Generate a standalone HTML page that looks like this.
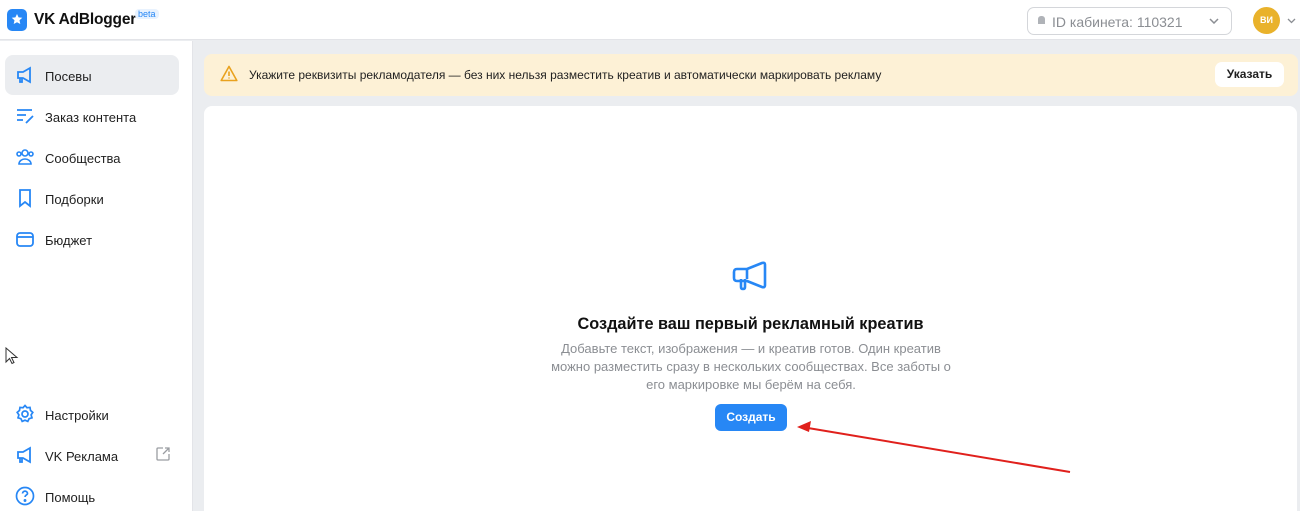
<!DOCTYPE html>
<html><head><meta charset="utf-8"><style>
*{box-sizing:border-box;margin:0;padding:0}
html,body{width:1300px;height:511px;overflow:hidden}
body{font-family:"Liberation Sans",sans-serif;background:#ebedf0;position:relative;color:#1f1f1f}
.hdr{position:absolute;left:0;top:0;width:1300px;height:40px;background:#fff;border-bottom:1px solid #e3e4e8}
.logo{position:absolute;left:7px;top:9px;width:20px;height:22px;background:#2787f5;border-radius:5px}
.brand{position:absolute;left:34px;top:11px;font-size:15.5px;font-weight:bold;color:#111;letter-spacing:-0.2px}
.beta{position:absolute;left:135px;top:9px;font-size:9px;color:#2787f5;background:#e8f2fe;padding:0 3px;border-radius:4px}
.idsel{position:absolute;left:1027px;top:7px;width:205px;height:28px;border:1px solid #d4d6da;border-radius:7px;font-size:14px;color:#8b8e93;padding:6px 0 0 24px}
.av{position:absolute;left:1253px;top:7px;width:27px;height:27px;border-radius:50%;background:#e9b22b;color:#fff;font-size:9px;font-weight:bold;text-align:center;line-height:27px}
.side{position:absolute;left:0;top:41px;width:193px;height:470px;background:#fff;border-right:1px solid #e3e4e8}
.it{position:absolute;left:5px;width:174px;height:40px;border-radius:8px;font-size:13px;padding:14px 0 0 40px}
.it svg{position:absolute;left:10px;top:10px}
.act{background:#ebedf0}
.ban{position:absolute;left:204px;top:54px;width:1094px;height:42px;background:#fdf1d6;border-radius:8px;font-size:12px;padding:14px 0 0 45px}
.btn1{position:absolute;right:14px;top:8px;background:#fff;border-radius:7px;width:69px;height:25px;font-size:12px;font-weight:bold;text-align:center;line-height:25px}
.card{position:absolute;left:204px;top:106px;width:1093px;height:405px;background:#fff;border-radius:8px 8px 0 0}
h2{position:absolute;left:0;width:100%;top:209px;text-align:center;font-size:16.3px;font-weight:bold;color:#111}
.p{position:absolute;left:344px;width:406px;top:234px;text-align:center;font-size:13px;line-height:18px;color:#8b8e93}
.cb{position:absolute;left:511px;top:298px;width:72px;height:27px;background:#2787f5;border-radius:6px;color:#fff;font-size:12px;font-weight:bold;text-align:center;line-height:27px}
</style></head><body>
<div class="hdr">
<div class="logo"><svg width="20" height="22" viewBox="0 0 20 22"><path d="M10 5l1.6 3.4 3.7.4-2.8 2.5.8 3.7L10 13.2 6.7 15l.8-3.7L4.7 8.8l3.7-.4z" fill="#fff"/></svg></div>
<div class="brand">VK AdBlogger</div><div class="beta">beta</div>
<div class="idsel"><span style="position:absolute;left:10px;top:8px;width:7px;height:8px;background:#b0b3b8;border-radius:3px 3px 0 0"></span>ID кабинета: 110321<svg style="position:absolute;right:12px;top:10px" width="10" height="6"><path d="M1 1l4 4 4-4" stroke="#8b8e93" stroke-width="1.5" fill="none"/></svg></div>
<div class="av">ВИ</div>
<svg style="position:absolute;left:1287px;top:18px" width="9" height="6"><path d="M1 1l3.5 3.5L8 1" stroke="#8b8e93" stroke-width="1.3" fill="none"/></svg>
</div>
<div class="side">
<div class="it act" style="top:14px"><svg width="20" height="20" viewBox="0 0 20 20" fill="none" stroke="#2787f5" stroke-width="1.8"><path d="M3 7h5l7-4v14l-7-4H3z"/><path d="M5 13v4h2v-4"/></svg>Посевы</div>
<div class="it" style="top:55px"><svg width="20" height="20" viewBox="0 0 20 20" fill="none" stroke="#2787f5" stroke-width="1.8"><path d="M2 4h15M2 9h9M2 14h6M11 17l7-7"/></svg>Заказ контента</div>
<div class="it" style="top:96px"><svg width="20" height="20" viewBox="0 0 20 20" fill="none" stroke="#2787f5" stroke-width="1.6"><circle cx="10" cy="6" r="3"/><path d="M4 17c0-3 3-5 6-5s6 2 6 5z"/><circle cx="4" cy="7" r="2"/><circle cx="16" cy="7" r="2"/></svg>Сообщества</div>
<div class="it" style="top:137px"><svg width="20" height="20" viewBox="0 0 20 20" fill="none" stroke="#2787f5" stroke-width="1.8"><path d="M5 2h10v16l-5-4-5 4z"/></svg>Подборки</div>
<div class="it" style="top:178px"><svg width="20" height="20" viewBox="0 0 20 20" fill="none" stroke="#2787f5" stroke-width="1.8"><rect x="2" y="4" width="16" height="13" rx="3"/><path d="M2 8h16"/></svg>Бюджет</div>
<div class="it" style="top:353px"><svg width="20" height="20" viewBox="0 0 20 20" fill="none" stroke="#2787f5" stroke-width="1.7"><circle cx="10" cy="10" r="3"/><path d="M10 1.5l2 2.2 3-.3.5 3 2.3 2-1.7 2.5.9 2.9-2.9.9-1.3 2.7-2.8-1.2-2.8 1.2-1.3-2.7-2.9-.9.9-2.9L2.2 8.4l2.3-2 .5-3 3 .3z"/></svg>Настройки</div>
<div class="it" style="top:394px"><svg width="20" height="20" viewBox="0 0 20 20" fill="none" stroke="#2787f5" stroke-width="1.8"><path d="M3 7h5l7-4v14l-7-4H3z"/><path d="M5 13v4h2v-4"/></svg>VK Реклама<svg style="left:150px;top:11px" width="16" height="16" viewBox="0 0 16 16" fill="none" stroke="#9a9da2" stroke-width="1.3"><path d="M8 2H3a1 1 0 00-1 1v10a1 1 0 001 1h10a1 1 0 001-1V8M10 2h4v4M14 2L8 8"/></svg></div>
<div class="it" style="top:435px"><svg width="20" height="20" viewBox="0 0 20 20" fill="none" stroke="#2787f5" stroke-width="1.7"><circle cx="10" cy="10" r="8.5"/><path d="M7.5 7.5a2.5 2.5 0 115 .3c-.5 1.2-2.5 1.5-2.5 3.2"/><circle cx="10" cy="14.5" r=".6" fill="#2787f5"/></svg>Помощь</div>
</div>
<svg style="position:absolute;left:5px;top:347px" width="14" height="18"><path d="M1 1v14l3.5-3.5 2.5 5 2-1-2.5-5H12z" fill="#fff" stroke="#333" stroke-width="1"/></svg>
<div class="ban"><svg style="position:absolute;left:16px;top:11px" width="18" height="17" viewBox="0 0 18 17" fill="none" stroke="#e9a21e" stroke-width="1.6"><path d="M9 1.5L16.8 15.5H1.2z" stroke-linejoin="round"/><path d="M9 6.5v4.5M9 12.5v1"/></svg>Укажите реквизиты рекламодателя — без них нельзя разместить креатив и автоматически маркировать рекламу<div class="btn1">Указать</div></div>
<div class="card">
<svg style="position:absolute;left:527px;top:155px" width="40" height="38" viewBox="0 0 40 38" fill="none" stroke="#2787f5" stroke-width="2.6" stroke-linejoin="round"><path d="M3 11q0-3 3-3h10l15-6q3-1 3 2v20q0 3-3 2l-15-6H6q-3 0-3-3z"/><path d="M10 18v8q0 2 2 2t2-2v-8"/><path d="M16 8v10"/></svg>
<h2>Создайте ваш первый рекламный креатив</h2>
<div class="p">Добавьте текст, изображения — и креатив готов. Один креатив можно разместить сразу в нескольких сообществах. Все заботы о его маркировке мы берём на себя.</div>
<div class="cb">Создать</div>
</div>
<svg style="position:absolute;left:0;top:0" width="1300" height="511"><path d="M1070 472L808 428" stroke="#e0201c" stroke-width="2"/><path d="M797 427l14-6-2 11z" fill="#e0201c"/></svg>
</body></html>
